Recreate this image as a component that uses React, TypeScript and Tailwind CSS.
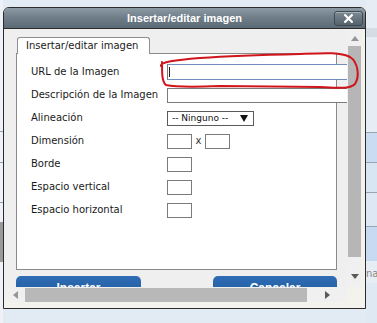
import React from "react";

const Tri = ({ dir, className }: { dir: "up" | "down" | "left" | "right"; className?: string }) => {
  const pts: Record<string, string> = {
    up: "0,5 4,0 8,5",
    down: "0,0 8,0 4,5",
    left: "5,0 5,8 0,4",
    right: "0,0 0,8 5,4",
  };
  const w = dir === "up" || dir === "down" ? 8 : 5;
  const h = dir === "up" || dir === "down" ? 5 : 8;
  return (
    <svg width={w} height={h} viewBox={`0 0 ${w} ${h}`} className={className}>
      <polygon points={pts[dir]} fill="#5a5a5a" />
    </svg>
  );
};

const Row = ({ label, children }: { label: string; children: React.ReactNode }) => (
  <div className="flex items-center h-[16px]">
    <div className="w-[136px] shrink-0 text-[10px] leading-none text-[#1a1a1a]">{label}</div>
    <div className="flex items-center shrink-0">{children}</div>
  </div>
);

const Box = () => <div className="w-[25px] h-[15px] border border-[#7a7a7a] bg-white" />;

export default function App() {
  return (
    <div
      className="w-[377px] h-[323px] bg-[#e2ebf4] relative overflow-hidden flex"
      style={{ fontFamily: '"DejaVu Sans", Verdana, sans-serif' }}
    >
      {/* left strip */}
      <div className="w-[3px] shrink-0 flex flex-col bg-[#eef2f6]">
        <div className="h-[132px] border-b border-[#9aa4ae]" />
        <div className="h-[31px] border-b border-[#9aa4ae]" />
        <div className="h-[40px] border-b border-[#9aa4ae]" />
        <div className="h-[19px]" />
        <div className="h-[40px] bg-[#9a9a9a]" />
        <div className="flex-1" />
      </div>

      {/* dialog */}
      <div className="mt-[7px] w-[363px] h-[302px] shrink-0 flex flex-col border border-[#2b2b2b] rounded-t-[6px] overflow-hidden bg-[#f4f2ec]">
        {/* title bar */}
        <div className="h-[20px] shrink-0 grid grid-cols-[1fr_auto_1fr] items-center bg-gradient-to-b from-[#8c9aa4] via-[#6e7d88] to-[#5b6a74]">
          <div />
          <div
            className="text-white font-bold text-[11px] leading-none"
            style={{ fontFamily: '"Liberation Sans", Arial, sans-serif' }}
          >
            Insertar/editar imagen
          </div>
          <div className="flex justify-end pr-[2px]">
            <div className="w-[29px] h-[15px] rounded-[3px] border border-[#3f4b54] bg-gradient-to-b from-[#7d8a94] to-[#56636c] flex items-center justify-center shadow-[inset_0_1px_0_rgba(255,255,255,0.35)]">
              <svg width="9" height="9" viewBox="0 0 9 9">
                <path d="M1.2 1.2 L7.8 7.8 M7.8 1.2 L1.2 7.8" stroke="#ffffff" strokeWidth="2.2" strokeLinecap="square" />
              </svg>
            </div>
          </div>
        </div>
        <div className="h-[1px] shrink-0 bg-[#2b2b2b]" />

        {/* body */}
        <div className="h-[258px] shrink-0 flex">
          {/* content area */}
          <div className="w-[343px] shrink-0 overflow-hidden bg-[#efefef] pt-[8px] pl-[12px]">
            {/* tab */}
            <div className="relative z-10 ml-[1px] w-[133px] h-[17px] -mb-[1px] border border-b-0 border-[#8f8f8f] rounded-t-[3px] bg-white pl-[8px] pt-[3px] text-[10px] leading-none text-[#1a1a1a]">
              Insertar/editar imagen
            </div>
            {/* panel */}
            <div className="w-[321px] h-[217px] border border-[#8a8a8a] bg-white pt-[10px] pl-[14px] flex flex-col gap-[7px]">
              <Row label="URL de la Imagen">
                <div className="relative w-[200px] h-[16px] bg-white border border-[#7a7a7a] border-t-[#6f8ebf] border-b-[#6f8ebf]">
                  <div className="absolute left-[1px] top-[2px] w-[1px] h-[10px] bg-[#222]" />
                </div>
              </Row>
              <Row label="Descripción de la Imagen">
                <div className="w-[200px] h-[15px] bg-white border border-[#7a7a7a]" />
              </Row>
              <Row label="Alineación">
                <div className="w-[87px] h-[15px] bg-white border border-[#5a5a5a] flex items-center pl-[4px] pr-[5px] justify-between">
                  <span className="text-[9px] leading-none text-[#111]">-- Ninguno --</span>
                  <svg width="8" height="7" viewBox="0 0 8 7">
                    <polygon points="0,0 8,0 4,7" fill="#111" />
                  </svg>
                </div>
              </Row>
              <Row label="Dimensión">
                <Box />
                <span className="w-[13px] text-center text-[10px] leading-none text-[#333]">x</span>
                <Box />
              </Row>
              <Row label="Borde">
                <Box />
              </Row>
              <Row label="Espacio vertical">
                <Box />
              </Row>
              <Row label="Espacio horizontal">
                <Box />
              </Row>
            </div>
            {/* buttons */}
            <div
              className="w-[321px] mt-[6px] flex justify-between"
              style={{ fontFamily: '"Liberation Sans", Arial, sans-serif' }}
            >
              <div className="w-[125px] h-[26px] rounded-t-[5px] bg-gradient-to-b from-[#2f6db5] to-[#1c5597] text-white font-bold text-[12px] leading-[14px] text-center pt-[5px]">
                Insertar
              </div>
              <div className="w-[124px] h-[26px] rounded-t-[5px] bg-gradient-to-b from-[#2f6db5] to-[#1c5597] text-white font-bold text-[12px] leading-[14px] text-center pt-[5px]">
                Cancelar
              </div>
            </div>
          </div>
          {/* vertical scrollbar */}
          <div className="w-[15px] shrink-0 bg-[#f0f0f0] flex flex-col items-center">
            <div className="h-[17px] w-full flex items-center justify-center pt-[1px]">
              <Tri dir="up" className="opacity-60" />
            </div>
            <div className="w-[13px] h-[211px] bg-[#b6b6b6]" />
            <div className="flex-1 w-full flex items-end justify-center pb-[8px]">
              <Tri dir="down" />
            </div>
          </div>
          <div className="flex-1 bg-[#f4f2ec]" />
        </div>

        {/* horizontal scrollbar */}
        <div className="h-[15px] shrink-0 flex">
          <div className="w-[343px] shrink-0 bg-[#f0f0f0] flex items-center">
            <div className="w-[21px] flex justify-center pl-[1px]">
              <Tri dir="left" className="opacity-60" />
            </div>
            <div className="w-[282px] h-[14px] mt-[1px] bg-[#b8b8b8]" />
            <div className="flex-1 flex justify-center">
              <Tri dir="right" />
            </div>
          </div>
          <div className="flex-1 bg-[#f4f2ec]" />
        </div>
        <div className="flex-1" />
      </div>

      {/* right strip */}
      <div className="flex-1 flex flex-col bg-[#e6edf5]">
        <div className="h-[28px]" />
        <div className="h-[9px] bg-[#d4dce6]" />
        <div className="h-[96px] border-b border-[#98a6b4]" />
        <div className="h-[30px] bg-[#cadcf1] border-b border-[#98a6b4]" />
        <div className="h-[30px] bg-[#d8e5f3] border-b border-[#98a6b4]" />
        <div className="h-[34px] bg-[#dde8f4] border-b border-[#98a6b4]" />
        <div className="h-[34px] bg-[#c7daf1]" />
        <div className="h-[22px] text-[10px] text-[#888] pt-[8px] leading-none">na</div>
        <div className="flex-1 bg-[#dfe9f3]" />
      </div>

      {/* red scribble overlay */}
      <svg className="absolute left-0 top-0 pointer-events-none" width="377" height="323" viewBox="0 0 377 323">
        <path
          d="M161 66 C 160 62, 175 60, 200 58 C 230 56, 260 55, 300 54 C 325 53, 340 52, 350 57 C 358 62, 360 76, 355 84 C 350 89, 340 88, 320 87 C 290 87, 250 86, 220 86 C 195 87, 175 87, 166 85 C 162 82, 162 74, 162 62"
          fill="none"
          stroke="#d0141c"
          strokeWidth="2"
          strokeLinecap="round"
        />
      </svg>
    </div>
  );
}
